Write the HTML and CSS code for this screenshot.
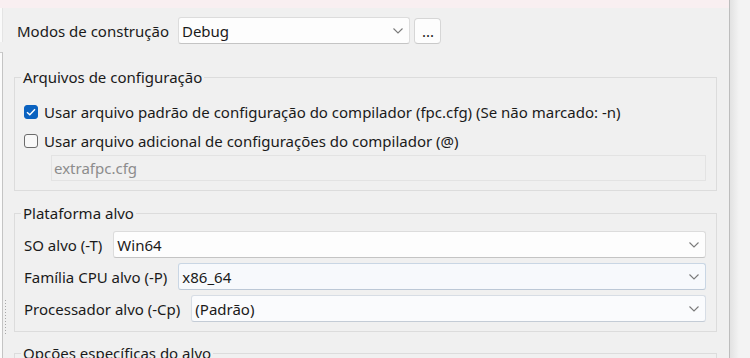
FILE: index.html
```html
<!DOCTYPE html>
<html lang="pt">
<head>
<meta charset="utf-8">
<title>Opções do compilador</title>
<link rel="stylesheet" href="styles.css">
</head>
<body>
<div class="window">
  <div class="main">
    <div class="topbar"></div>
    <div class="shell">
      <div class="leftcol">
        <div class="lbox1"></div>
        <div class="lbox2"></div>
      </div>
      <div class="content">
        <div class="header">
          <span class="label">Modos de construção</span>
          <div class="combo combo-header"><span class="combo-text">Debug</span><svg class="chev" width="10" height="6" viewBox="0 0 10 6"><path d="M0.5 0.5 L5 5 L9.5 0.5" fill="none" stroke="#7a7a7a" stroke-width="1.1"/></svg></div>
          <button class="dots-btn">...</button>
        </div>

        <fieldset class="group group-cfg">
          <legend class="legend">Arquivos de configuração</legend>
          <label class="check-row">
            <span class="checkbox checked"><svg width="10" height="8" viewBox="0 0 10 8"><path d="M1 4.2 L3.8 6.8 L9 1.2" fill="none" stroke="#ffffff" stroke-width="1.4"/></svg></span>
            <span>Usar arquivo padrão de configuração do compilador (fpc.cfg) (Se não marcado: -n)</span>
          </label>
          <label class="check-row">
            <span class="checkbox"></span>
            <span>Usar arquivo adicional de configurações do compilador (@)</span>
          </label>
          <div class="edit disabled">extrafpc.cfg</div>
        </fieldset>

        <fieldset class="group group-target">
          <legend class="legend">Plataforma alvo</legend>
          <div class="field-row">
            <span class="label">SO alvo (-T)</span>
            <div class="combo"><span class="combo-text">Win64</span><svg class="chev" width="10" height="6" viewBox="0 0 10 6"><path d="M0.5 0.5 L5 5 L9.5 0.5" fill="none" stroke="#7a7a7a" stroke-width="1.1"/></svg></div>
          </div>
          <div class="field-row">
            <span class="label">Família CPU alvo (-P)</span>
            <div class="combo combo-hot"><span class="combo-text">x86_64</span><svg class="chev" width="10" height="6" viewBox="0 0 10 6"><path d="M0.5 0.5 L5 5 L9.5 0.5" fill="none" stroke="#7a7a7a" stroke-width="1.1"/></svg></div>
          </div>
          <div class="field-row">
            <span class="label">Processador alvo (-Cp)</span>
            <div class="combo combo-soft"><span class="combo-text">(Padrão)</span><svg class="chev" width="10" height="6" viewBox="0 0 10 6"><path d="M0.5 0.5 L5 5 L9.5 0.5" fill="none" stroke="#7a7a7a" stroke-width="1.1"/></svg></div>
          </div>
        </fieldset>

        <fieldset class="group group-opts">
          <legend class="legend">Opções específicas do alvo</legend>
        </fieldset>
      </div>
    </div>
  </div>
  <div class="rail"></div>
</div>
</body>
</html>
```

FILE: styles.css
```css
html, body {
  margin: 0;
  padding: 0;
}
body {
  width: 750px;
  height: 358px;
  overflow: hidden;
  background: #f0f0f0;
  font-family: "Noto Sans", "Open Sans", sans-serif;
  font-size: 15px;
  color: #1a1a1a;
}
.window {
  display: flex;
  height: 358px;
  overflow: hidden;
}
.main {
  width: 730px;
  display: flex;
  flex-direction: column;
  overflow: hidden;
}
.topbar {
  height: 8px;
  background: #f9eff1;
  flex: none;
}
.shell {
  flex: 1;
  display: flex;
  min-height: 0;
  overflow: hidden;
}
.leftcol {
  width: 3px;
  display: flex;
  flex-direction: column;
  gap: 10px;
}
.lbox1 {
  height: 34px;
  background: #fafafa;
  border-right: 1px solid #e4e4e4;
}
.lbox2 {
  flex: 1;
  background: #fbfbfb;
  border-top: 1px solid #cbcbcb;
  border-right: 1px solid #c4c4c4;
}
.content {
  flex: 1;
  min-width: 0;
  overflow: hidden;
  background-image: repeating-linear-gradient(to bottom, #a8a8a8 0 1px, transparent 1px 3px);
  background-repeat: no-repeat;
  background-size: 1px 36px;
  background-position: 2px 292px;
}
.rail {
  width: 20px;
  border-left: 1px solid #bdbdbd;
  background: linear-gradient(to right, #e2e2e2, #f3f3f3 9px);
}

/* header row */
.header {
  display: flex;
  align-items: center;
  gap: 9px;
  padding-left: 14px;
  margin-top: 9px;
  height: 27px;
}
.header .dots-btn {
  margin-left: -5px;
}
.label {
  white-space: nowrap;
}

/* combo boxes */
.combo {
  box-sizing: border-box;
  height: 27px;
  display: flex;
  align-items: center;
  justify-content: space-between;
  background: #fdfdfd;
  border: 1px solid #dcdcdc;
  border-bottom-color: #c4c4c4;
  border-radius: 3px;
  padding: 0 6px 0 3px;
}
.combo-header {
  width: 232px;
}
.combo-text {
  white-space: nowrap;
}
.chev {
  flex: none;
}
.combo-hot {
  background: #f7f9fc;
  border-color: #c9d6e4;
  border-bottom-color: #bcc8d6;
}
.combo-soft {
  background: #fafbfd;
  border-color: #d7dde5;
  border-bottom-color: #c4ccd6;
}

.dots-btn {
  box-sizing: border-box;
  width: 27px;
  height: 26px;
  background: #fdfdfd;
  border: 1px solid #d6d6d6;
  border-bottom-color: #c9c9c9;
  border-radius: 4px;
  font-family: inherit;
  font-size: 15px;
  color: #1a1a1a;
  padding: 0 0 0 1px;
  line-height: 20px;
}

/* group boxes */
.group {
  margin: 0 12px 0 11px;
  border: 1px solid #dcdcdc;
  padding: 0 10px 9px 9px;
  min-width: 0;
}
.legend {
  padding: 0 2px;
  margin-left: -3px;
  line-height: 20px;
  font-size: 15px;
}
.group-cfg {
  margin-top: 23px;
  padding-top: 14px;
}
.group-target {
  margin-top: 12px;
  padding-top: 8px;
}
.group-opts {
  margin-top: 11px;
  padding-bottom: 0;
  height: 10px;
}

/* check rows */
.check-row {
  display: flex;
  align-items: center;
  gap: 6px;
  height: 22px;
  white-space: nowrap;
}
.check-row + .check-row {
  margin-top: 7px;
}
.checkbox {
  box-sizing: border-box;
  width: 14px;
  height: 14px;
  border: 1px solid #6b6b6b;
  border-radius: 3px;
  background: #f8f8f8;
  display: flex;
  align-items: center;
  justify-content: center;
  flex: none;
}
.checkbox.checked {
  background: #0a62c0;
  border-color: #0a62c0;
}

.edit {
  box-sizing: border-box;
  height: 26px;
  margin: 3px 0 0 27px;
  border: 1px solid #e3e3e3;
  padding: 0 2px;
  line-height: 24px;
}
.edit.disabled {
  color: #8c8c8c;
  background: #f0f0f0;
}

/* platform rows */
.field-row {
  display: flex;
  align-items: center;
  gap: 11px;
}
.field-row + .field-row {
  margin-top: 5px;
}
.field-row .combo {
  flex: 1;
  min-width: 0;
}
```
